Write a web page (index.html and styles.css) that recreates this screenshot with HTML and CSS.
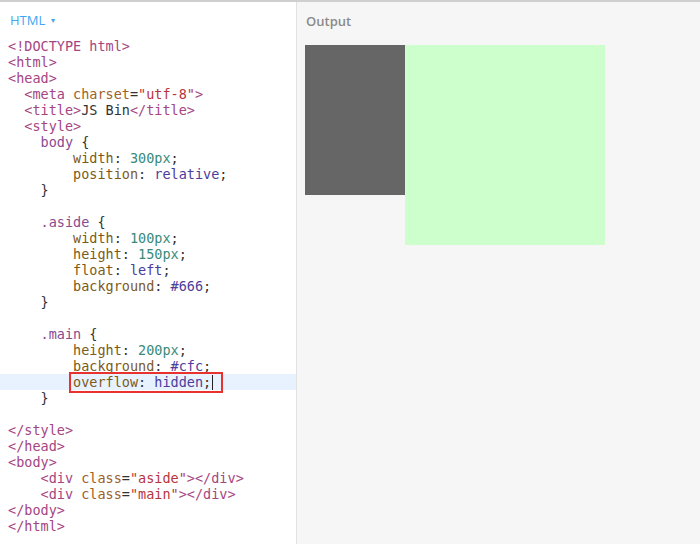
FILE: index.html
```html
<!DOCTYPE html>
<html lang="en">
  <head>
    <meta charset="UTF-8" />
    <title>JS Bin</title>
    <link rel="stylesheet" href="styles.css">
  </head>
  <body>
    <div class="app">
      <div class="editor">
        <div class="panel-label">HTML <span class="caret-down">&#9662;</span></div>
        <div class="code"><div class="line"><span class="tag">&lt;!DOCTYPE html&gt;</span></div><div class="line"><span class="tag">&lt;html&gt;</span></div><div class="line"><span class="tag">&lt;head&gt;</span></div><div class="line">  <span class="tag">&lt;meta</span> <span class="attr">charset</span>=<span class="str">"utf-8"</span><span class="tag">&gt;</span></div><div class="line">  <span class="tag">&lt;title&gt;</span>JS Bin<span class="tag">&lt;/title&gt;</span></div><div class="line">  <span class="tag">&lt;style&gt;</span></div><div class="line">    <span class="sel">body</span> {</div><div class="line">        <span class="prop">width</span>: <span class="num">300px</span>;</div><div class="line">        <span class="prop">position</span>: <span class="kw">relative</span>;</div><div class="line">    }</div><div class="line"> </div><div class="line">    <span class="sel">.aside</span> {</div><div class="line">        <span class="prop">width</span>: <span class="num">100px</span>;</div><div class="line">        <span class="prop">height</span>: <span class="num">150px</span>;</div><div class="line">        <span class="prop">float</span>: <span class="kw">left</span>;</div><div class="line">        <span class="prop">background</span>: <span class="kw">#666</span>;</div><div class="line">    }</div><div class="line"> </div><div class="line">    <span class="sel">.main</span> {</div><div class="line">        <span class="prop">height</span>: <span class="num">200px</span>;</div><div class="line">        <span class="prop">background</span>: <span class="kw">#cfc</span>;</div><div class="line active">        <span class="mark"><span class="prop">overflow</span>: <span class="kw">hidden</span>;<span class="cursor"></span></span></div><div class="line">    }</div><div class="line"> </div><div class="line"><span class="tag">&lt;/style&gt;</span></div><div class="line"><span class="tag">&lt;/head&gt;</span></div><div class="line"><span class="tag">&lt;body&gt;</span></div><div class="line">    <span class="tag">&lt;div</span> <span class="attr">class</span>=<span class="str">"aside"</span><span class="tag">&gt;&lt;/div&gt;</span></div><div class="line">    <span class="tag">&lt;div</span> <span class="attr">class</span>=<span class="str">"main"</span><span class="tag">&gt;&lt;/div&gt;</span></div><div class="line"><span class="tag">&lt;/body&gt;</span></div><div class="line"><span class="tag">&lt;/html&gt;</span></div></div>
      </div>
      <div class="output">
        <div class="output-label">Output</div>
        <div class="preview">
          <div class="aside"></div>
          <div class="main"></div>
        </div>
      </div>
    </div>
  </body>
</html>
```

FILE: styles.css
```css
body {
  margin: 0;
  padding: 0;
  font-family: "Open Sans", Arial, sans-serif;
  background: #ffffff;
}

.app {
  display: flex;
  height: 544px;
  border-top: 2px solid #cfcfcf;
  box-sizing: border-box;
}

.editor {
  width: 296px;
  background: #ffffff;
  border-right: 1px solid #e2e2e2;
}

.panel-label {
  padding: 10px 0 0 10px;
  height: 28px;
  box-sizing: border-box;
  font-size: 13px;
  color: #3ea6f2;
  line-height: 16px;
}

.caret-down {
  font-size: 8px;
  margin-left: 2px;
  vertical-align: 2px;
}

.code {
  padding-top: 8px;
  font-family: "DejaVu Sans Mono", monospace;
  font-size: 13.5px;
  color: #333333;
}

.line {
  white-space: pre;
  height: 16px;
  line-height: 16px;
  padding-left: 8px;
}

.line.active {
  background: #e8f2ff;
}

.mark {
  position: relative;
}

.mark::before {
  content: "";
  position: absolute;
  left: -4px;
  right: -10px;
  top: -2px;
  bottom: -3px;
  border: 2px solid #e8322f;
}

.cursor {
  display: inline-block;
  width: 1px;
  height: 15px;
  background: #222222;
  vertical-align: -3px;
  margin-left: 1px;
}

.tag { color: #a54582; }
.attr { color: #a0602a; }
.str { color: #b8343c; }
.sel { color: #8a4a8f; }
.prop { color: #7d5a1a; }
.num { color: #3a8a78; }
.kw { color: #4c3c9c; }

.output {
  flex: 1;
  background: #f6f6f6;
}

.output-label {
  padding: 10px 0 0 9px;
  height: 43px;
  box-sizing: border-box;
  font-size: 13px;
  font-weight: 600;
  color: #8a8a8a;
}

.preview {
  width: 300px;
  margin-left: 8px;
}

.aside {
  width: 100px;
  height: 150px;
  float: left;
  background: #666666;
}

.main {
  height: 200px;
  background: #ccffcc;
  overflow: hidden;
}
```
